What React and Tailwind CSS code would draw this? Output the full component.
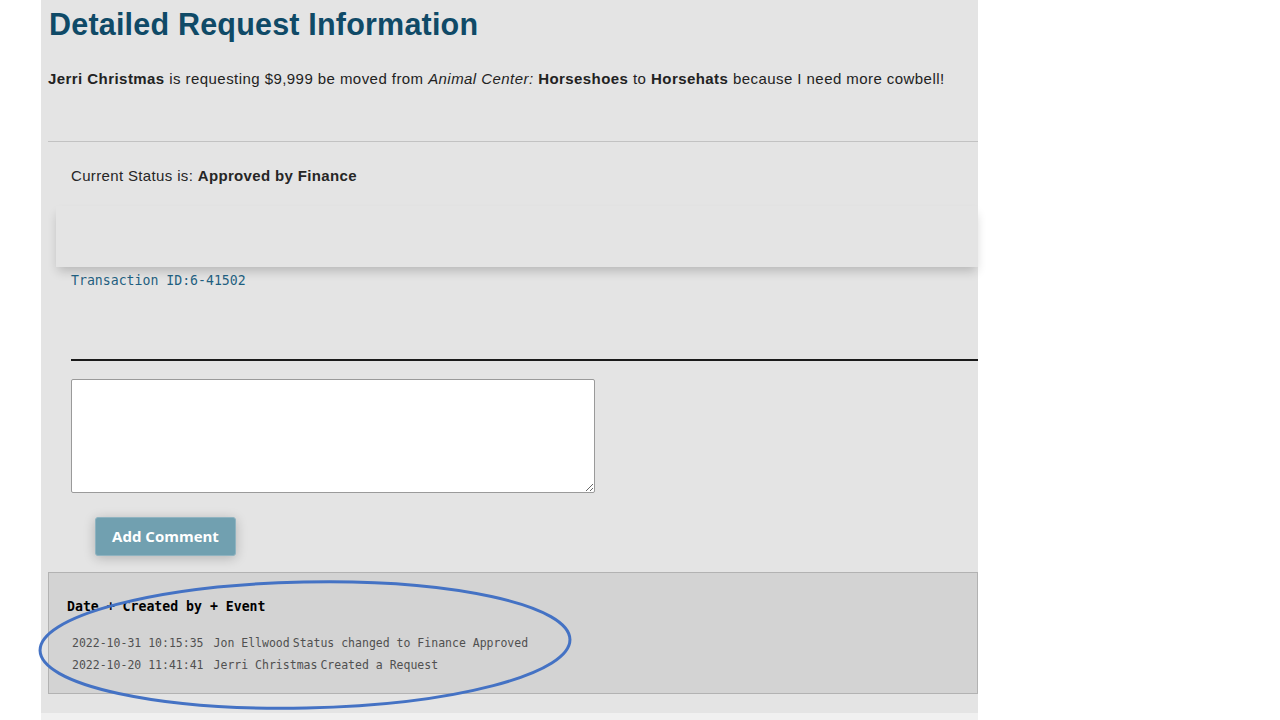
import React from 'react';

const sans = { fontFamily: '"Open Sans", "Liberation Sans", Arial, sans-serif' };

const logRows = [
  { date: '2022-10-31 10:15:35', who: 'Jon Ellwood', event: 'Status changed to Finance Approved' },
  { date: '2022-10-20 11:41:41', who: 'Jerri Christmas', event: 'Created a Request' },
];

const App = () => {
  return (
    <div className="w-[1280px] h-[720px] bg-white flex overflow-hidden">
      <div className="w-[41px] shrink-0" />
      <div className="relative w-[937px] h-[720px] shrink-0 bg-[#e4e4e4] flex flex-col font-['Liberation_Sans',Arial,sans-serif]">
        <h1 className="pl-[8px] pt-[5px] text-[30.5px] leading-[38px] font-bold text-[#0f4a67] tracking-[0.2px]">
          Detailed Request Information
        </h1>
        <p className="pl-[7px] mt-[26px] text-[15px] leading-[20px] text-[#222] tracking-[0.44px]">
          <b>Jerri Christmas</b> is requesting $9,999 be moved from <i>Animal Center:</i> <b>Horseshoes</b> to{' '}
          <b>Horsehats</b> because I need more cowbell!
        </p>

        <div className="ml-[7px] mt-[52px] h-px bg-[#c2c2c2]" />

        <div className="pl-[30px] mt-[24px] text-[15px] leading-[20px] text-[#262626] tracking-[0.35px]">
          Current Status is: <b>Approved by Finance</b>
        </div>

        <div className="ml-[15px] mt-[20px] h-[61px] bg-[#e4e4e4] shadow-[0_6px_10px_-2px_rgba(0,0,0,0.2)]" />

        <div className="pl-[30px] mt-[6px] font-['DejaVu_Sans_Mono',monospace] text-[13.2px] leading-[16px] text-[#1f5f80]">
          Transaction ID:6-41502
        </div>

        <div className="ml-[30px] mt-[70px] h-[2px] bg-[#1a1a1a]" />

        <textarea
          className="ml-[30px] mt-[18px] w-[524px] h-[114px] bg-white border border-[#9a9a9a] rounded-[2px] resize-y outline-none"
        />

        <button
          className="ml-[54px] mt-[24px] w-[141px] h-[39px] bg-[#71a0b0] text-white text-[15px] font-bold rounded-[3px] border border-[#8fb3c0] shadow-[0_2px_12px_rgba(0,0,0,0.22)]"
          style={sans}
        >
          Add Comment
        </button>

        <div className="ml-[7px] mt-[16px] h-[122px] bg-[#d3d3d3] border border-[#b2b2b2] pl-[18px] pt-[26px] font-['DejaVu_Sans_Mono',monospace]">
          <div className="text-[13.2px] leading-[16px] font-bold text-black">Date + Created by + Event</div>
          <div className="mt-[17px] pl-[5px] text-[11.5px] leading-[22px] text-[#505050]">
            {logRows.map((r) => (
              <div key={r.date} className="whitespace-pre">
                <span>{r.date}</span>
                <span className="ml-[10px]">{r.who}</span>
                <span className="ml-[3px]">{r.event}</span>
              </div>
            ))}
          </div>
        </div>

        <div className="mt-auto h-[7px] bg-[#f0f0f0]" />

        <svg className="absolute left-[-3px] top-[579px] pointer-events-none" width="536" height="134" viewBox="0 0 536 134">
          <ellipse cx="267" cy="66" rx="265" ry="63" fill="none" stroke="#4472c4" strokeWidth="3" transform="rotate(-1.2 267 66)" />
        </svg>
      </div>
    </div>
  );
};

export default App;
